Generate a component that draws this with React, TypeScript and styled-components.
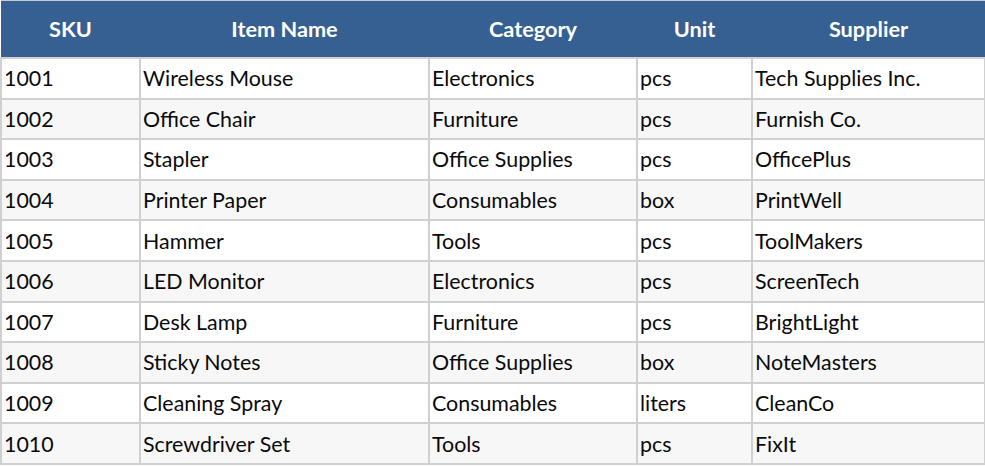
import React from 'react'
import styled, { createGlobalStyle } from 'styled-components'

const GlobalStyle = createGlobalStyle`
    body {
        margin: 0;
        background: #ffffff;
        font-family: Lato, 'Open Sans', sans-serif;
    }
`

const Table = styled.table`
    width: 984px;
    border-collapse: collapse;
    table-layout: fixed;
    border-top: 1px solid #c4cbd4;
`

const HeadCell = styled.th`
    background: #366092;
    color: #ffffff;
    font-weight: 700;
    font-size: 21.7px;
    height: 56px;
    padding: 0;
    text-align: center;
    border: none;
    border-bottom: 2px solid #d0d0d0;
`

const Row = styled.tr<{ $striped: boolean }>`
    background: ${(p) => (p.$striped ? '#f7f7f7' : '#ffffff')};
`

const Cell = styled.td`
    height: 38.6px;
    padding: 0 0 0 2px;
    font-size: 21.4px;
    color: #0a0a0a;
    border: 2px solid #d0d0d0;
    white-space: nowrap;
    overflow: hidden;
`

const columns = [
    { label: 'SKU', width: 139 },
    { label: 'Item Name', width: 289 },
    { label: 'Category', width: 208 },
    { label: 'Unit', width: 115 },
    { label: 'Supplier', width: 233 },
]

const items = [
    ['1001', 'Wireless Mouse', 'Electronics', 'pcs', 'Tech Supplies Inc.'],
    ['1002', 'Office Chair', 'Furniture', 'pcs', 'Furnish Co.'],
    ['1003', 'Stapler', 'Office Supplies', 'pcs', 'OfficePlus'],
    ['1004', 'Printer Paper', 'Consumables', 'box', 'PrintWell'],
    ['1005', 'Hammer', 'Tools', 'pcs', 'ToolMakers'],
    ['1006', 'LED Monitor', 'Electronics', 'pcs', 'ScreenTech'],
    ['1007', 'Desk Lamp', 'Furniture', 'pcs', 'BrightLight'],
    ['1008', 'Sticky Notes', 'Office Supplies', 'box', 'NoteMasters'],
    ['1009', 'Cleaning Spray', 'Consumables', 'liters', 'CleanCo'],
    ['1010', 'Screwdriver Set', 'Tools', 'pcs', 'FixIt'],
]

const App = () => {
    return (
        <>
            <GlobalStyle />
            <Table>
                <colgroup>
                    {columns.map((c) => (
                        <col key={c.label} style={{ width: c.width }} />
                    ))}
                </colgroup>
                <thead>
                    <tr>
                        {columns.map((c) => (
                            <HeadCell key={c.label}>{c.label}</HeadCell>
                        ))}
                    </tr>
                </thead>
                <tbody>
                    {items.map((row, i) => (
                        <Row key={row[0]} $striped={i % 2 === 1}>
                            {row.map((value, j) => (
                                <Cell key={j}>{value}</Cell>
                            ))}
                        </Row>
                    ))}
                </tbody>
            </Table>
        </>
    )
}

export default App
